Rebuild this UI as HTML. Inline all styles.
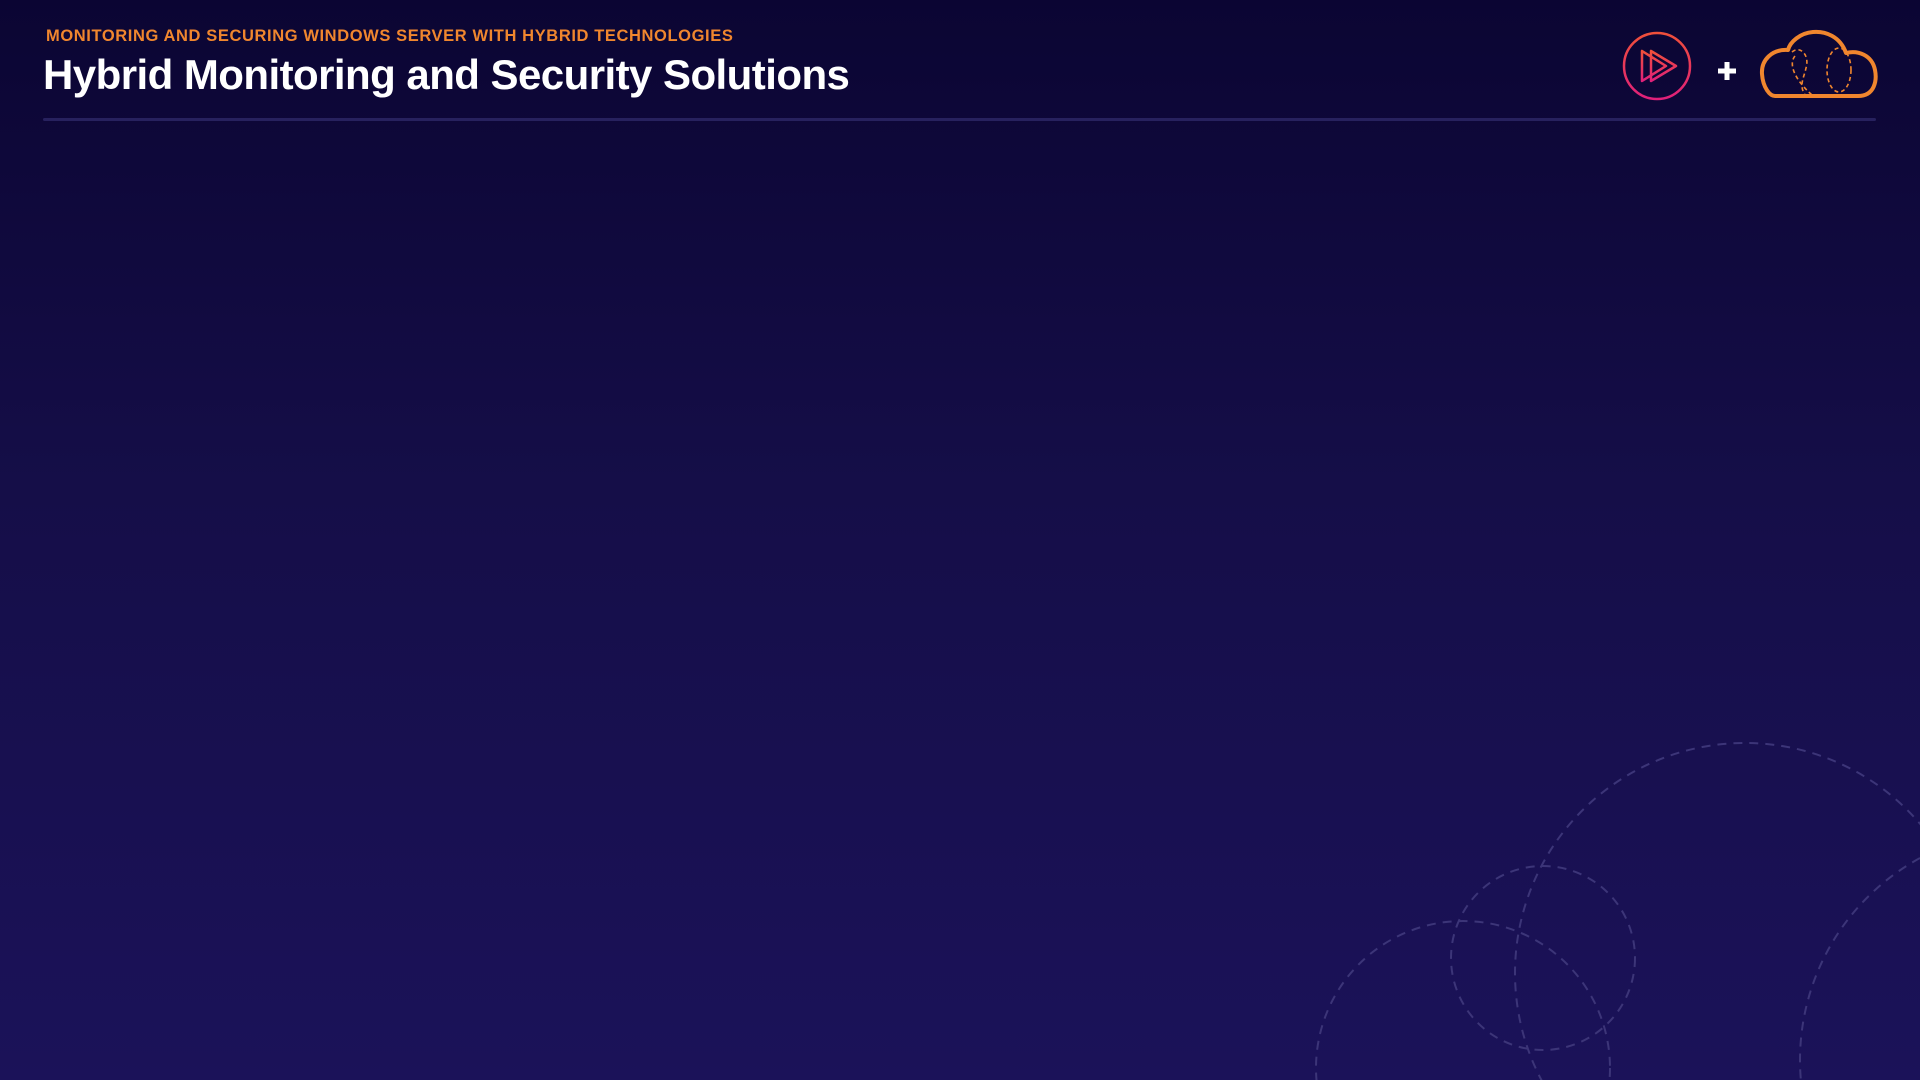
<!DOCTYPE html>
<html><head><meta charset="utf-8"><style>
html,body{margin:0;padding:0;width:1920px;height:1080px;overflow:hidden}
body{position:relative;background:linear-gradient(180deg,#0b0533 0%,#150e48 45%,#1b1259 100%);font-family:"Liberation Sans",sans-serif}
.sub{position:absolute;left:46px;top:27px;font-size:16.5px;font-weight:bold;color:#f0862e;letter-spacing:0.6px;white-space:nowrap}
.title{position:absolute;left:43px;top:51px;font-size:42px;font-weight:bold;color:#fff;letter-spacing:-0.55px;white-space:nowrap}
.line{position:absolute;left:43px;top:118px;width:1833px;height:3px;background:#27215e;border-radius:2px}
svg{position:absolute;left:0;top:0;display:block}
</style></head><body>
<div class="sub">MONITORING AND SECURING WINDOWS SERVER WITH HYBRID TECHNOLOGIES</div>
<div class="title">Hybrid Monitoring and Security Solutions</div>
<div class="line"></div>
<svg width="1920" height="1080">
<defs><linearGradient id="pg" x1="0" y1="0" x2="0" y2="1"><stop offset="0" stop-color="#f0503a"/><stop offset="1" stop-color="#e0207a"/></linearGradient></defs>
<circle cx="1657" cy="66" r="33" fill="none" stroke="url(#pg)" stroke-width="2.5"/>
<path d="M1642 51 L1642 81 L1666 66 Z M1651 51 L1651 81 L1676 66 Z" fill="none" stroke="url(#pg)" stroke-width="2.5" stroke-linejoin="round"/>
<path d="M1718 71 H1736 M1727 62 V80" stroke="#fff" stroke-width="5"/>
<path d="M1775 96 H1858 C1875 96 1877 80 1875 70 C1872 55 1858 50 1846 53 C1840 36 1825 31 1813 32 C1800 33 1790 42 1788 50 C1772 49 1761 60 1762 74 C1763 88 1770 96 1775 96 Z" fill="none" stroke="#f0862e" stroke-width="4" stroke-linejoin="round"/>
<g fill="none" stroke="#f0862e" stroke-width="1.6" stroke-dasharray="4 3">
<path d="M1792 52 C1800 45 1810 55 1806 68 C1804 78 1798 86 1806 96"/>
<path d="M1795 56 C1788 64 1795 80 1812 95"/>
<ellipse cx="1839" cy="70" rx="12" ry="22"/>
</g>
<g fill="none" stroke="#3c3578" stroke-width="2" stroke-dasharray="9 7">
<circle cx="1745" cy="973" r="230"/>
<circle cx="1543" cy="958" r="92"/>
<circle cx="1463" cy="1068" r="147"/>
<circle cx="2030" cy="1060" r="230"/>
</g>
</svg>
</body></html>
